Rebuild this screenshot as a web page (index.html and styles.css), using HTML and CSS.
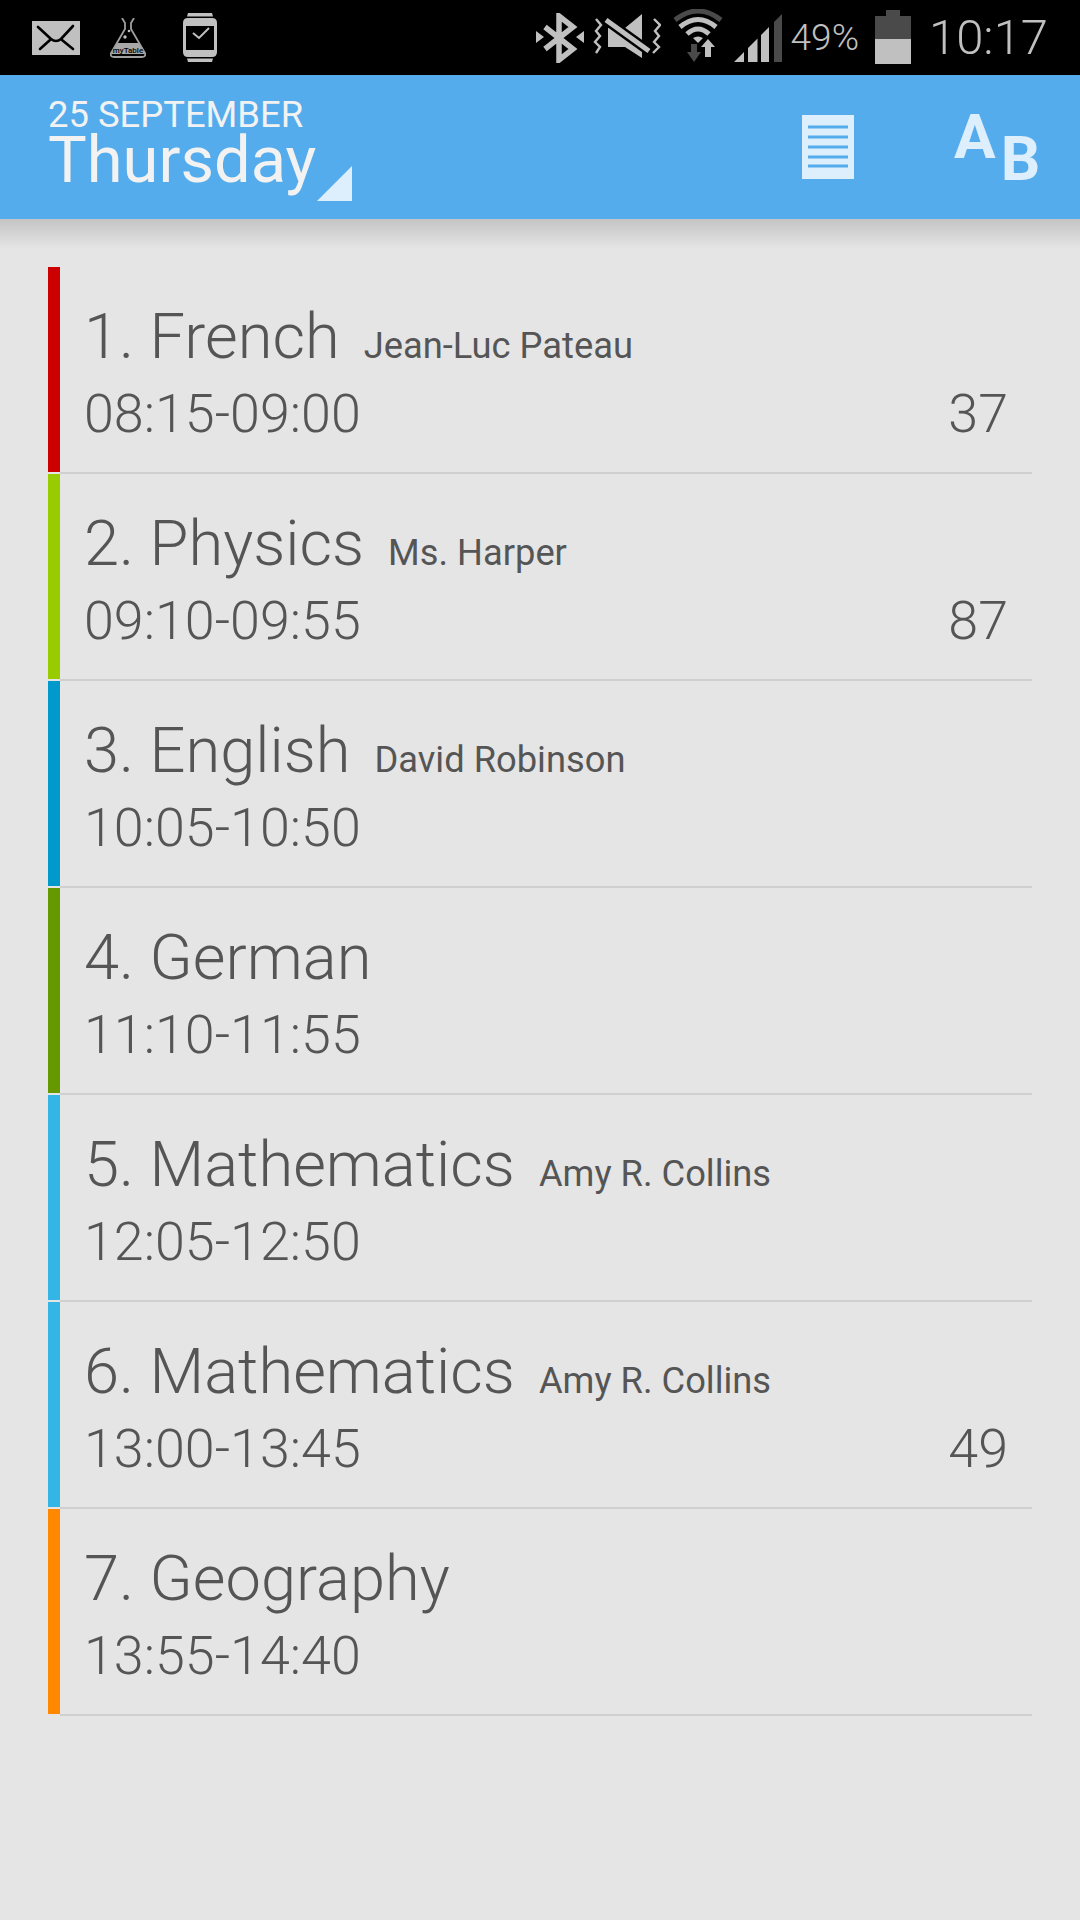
FILE: index.html
```html
<!DOCTYPE html>
<html lang="en">
<head>
  <meta charset="UTF-8" />
  <title>myTable</title>
  <link rel="stylesheet" href="styles.css">
</head>
<body>
  <div class="statusbar">
    <svg class="ic-mail" viewBox="0 0 48 34" width="48" height="34">
      <rect width="48" height="34" fill="#c0c0c0" />
      <path d="M6 6 L19 18 Q24 22 29 18 L41 5 M8 28 L18 19 M41 28 L30 19" stroke="#000" stroke-width="2.6" fill="none" stroke-linecap="round" />
    </svg>
    <svg class="ic-flask" viewBox="0 0 36 40" width="36" height="40">
      <path d="M7 25 H29 L35 36 H1 Z" fill="#a8a8a8" />
      <path d="M12 0 L15 5 V11 L1 35 Q0 39 4 39 H32 Q36 39 35 35 L21 11 V5 L24 0" fill="none" stroke="#a0a0a0" stroke-width="1.800" />
      <circle cx="15" cy="19" r="1.700" fill="#c0c0c0" />
      <circle cx="19" cy="13" r="1.300" fill="#c0c0c0" />
      <text class="flask-label" x="18" y="35" text-anchor="middle">myTable</text>
      <path d="M5 36.500 H31" stroke="#000" stroke-width="0.800" />
    </svg>
    <svg class="ic-watch" viewBox="0 0 34 49" width="34" height="49">
      <path d="M5 0 H29 L30 3.500 H4 Z M4 45.500 H30 L29 49 H5 Z" fill="#c0c0c0" />
      <path d="M5 5 H29 Q34 5 34 10 V39 Q34 44 29 44 H5 Q0 44 0 39 V10 Q0 5 5 5 Z" fill="#c0c0c0" />
      <rect x="3" y="13" width="28" height="24" fill="#000" />
      <path d="M10 20 L16 25 L26 15" fill="none" stroke="#c0c0c0" stroke-width="2" />
    </svg>

    <div class="status-right">
      <svg class="ic-bt" viewBox="0 0 48 50" width="48" height="50">
        <path d="M0 18 L8 24 L0 30 Z M48 18 L40 24 L48 30 Z" fill="#c0c0c0" />
        <path d="M9 14 L37 36 L23 47 V3 L37 14 L9 36" fill="none" stroke="#c0c0c0" stroke-width="5.500" />
      </svg>
      <svg class="ic-mute" viewBox="0 0 68 48" width="68" height="48">
        <path d="M3 5 L8 11 L3 17 L7 22 L2 28 L7 33 L3 39" fill="none" stroke="#c0c0c0" stroke-width="2.400" />
        <path d="M61 5 L67 11 L62 17 L66 22 L61 28 L66 33 L60 39" fill="none" stroke="#c0c0c0" stroke-width="2.400" />
        <path d="M15 14 H32 L49 0 V44 L32 33 H15 Z" fill="#c0c0c0" />
        <path d="M13 6 L56 37" stroke="#000" stroke-width="10" />
        <path d="M13 6 L56 37" stroke="#c0c0c0" stroke-width="5" />
      </svg>
      <svg class="ic-wifi" viewBox="0 0 50 54" width="50" height="54">
        <path d="M2 11 Q25 -7 48 11" fill="none" stroke="#4a4a4a" stroke-width="5" />
        <path d="M7 18 Q25 3 43 18" fill="none" stroke="#c0c0c0" stroke-width="5" />
        <path d="M14 25 Q25 15 36 25" fill="none" stroke="#c0c0c0" stroke-width="5" />
        <path d="M20 29 Q25 26 30 29 L25 34 Z" fill="#c0c0c0" />
        <path d="M18 35 H24 V43 H28 L21 53 L14 43 H18 Z" fill="#4a4a4a" />
        <path d="M35 30 L42 38 H38 V48 H32 V38 H28 Z" fill="#c0c0c0" />
      </svg>
      <svg class="ic-signal" viewBox="0 0 48 48" width="48" height="48">
        <path d="M0 48 L10 38 V48 Z M14 34 L23.500 24.500 V48 H14 Z M27 21 L35 13 V48 H27 Z" fill="#c0c0c0" />
        <path d="M40 8 L48 0 V48 H40 Z" fill="#4a4a4a" />
      </svg>
      <span class="percent">49%</span>
      <svg class="ic-battery" viewBox="0 0 36 54" width="36" height="54">
        <rect x="11" y="0" width="14" height="6" fill="#4a4a4a" />
        <rect y="6" width="36" height="23" fill="#4a4a4a" />
        <rect y="29" width="36" height="25" fill="#c0c0c0" />
      </svg>
      <span class="clock">10:17</span>
    </div>
  </div>

  <header class="appbar">
    <div class="date-block">
      <div class="date-small">25 SEPTEMBER</div>
      <div class="date-day">Thursday</div>
      <div class="corner"></div>
    </div>
    <svg class="ic-doc" viewBox="0 0 52 64" width="52" height="64">
      <rect width="52" height="64" fill="#ddeefc" />
      <path d="M6 12 H46 M6 22 H46 M6 32 H46 M6 42 H46 M6 51 H46" stroke="#55acec" stroke-width="3" />
    </svg>
    <div class="ab-icon"><span>A</span><span class="ab-b">B</span></div>
  </header>
  <div class="appbar-shadow"></div>

  <div class="lessons">
    <div class="lesson">
      <div class="lesson-color red"></div>
      <div class="lesson-body">
        <div class="lesson-top"><span class="subject">1. French</span><span class="teacher">Jean-Luc Pateau</span></div>
        <div class="lesson-bottom"><span>08:15-09:00</span><span class="room">37</span></div>
      </div>
    </div>
    <div class="lesson">
      <div class="lesson-color lime"></div>
      <div class="lesson-body">
        <div class="lesson-top"><span class="subject">2. Physics</span><span class="teacher">Ms. Harper</span></div>
        <div class="lesson-bottom"><span>09:10-09:55</span><span class="room">87</span></div>
      </div>
    </div>
    <div class="lesson">
      <div class="lesson-color blue"></div>
      <div class="lesson-body">
        <div class="lesson-top"><span class="subject">3. English</span><span class="teacher">David Robinson</span></div>
        <div class="lesson-bottom"><span>10:05-10:50</span></div>
      </div>
    </div>
    <div class="lesson">
      <div class="lesson-color green"></div>
      <div class="lesson-body">
        <div class="lesson-top"><span class="subject">4. German</span></div>
        <div class="lesson-bottom"><span>11:10-11:55</span></div>
      </div>
    </div>
    <div class="lesson">
      <div class="lesson-color sky"></div>
      <div class="lesson-body">
        <div class="lesson-top"><span class="subject">5. Mathematics</span><span class="teacher">Amy R. Collins</span></div>
        <div class="lesson-bottom"><span>12:05-12:50</span></div>
      </div>
    </div>
    <div class="lesson">
      <div class="lesson-color sky"></div>
      <div class="lesson-body">
        <div class="lesson-top"><span class="subject">6. Mathematics</span><span class="teacher">Amy R. Collins</span></div>
        <div class="lesson-bottom"><span>13:00-13:45</span><span class="room">49</span></div>
      </div>
    </div>
    <div class="lesson">
      <div class="lesson-color orange"></div>
      <div class="lesson-body">
        <div class="lesson-top"><span class="subject">7. Geography</span></div>
        <div class="lesson-bottom"><span>13:55-14:40</span></div>
      </div>
    </div>
  </div>
</body>
</html>
```

FILE: styles.css
```css
body {
  margin: 0;
  height: 1920px;
  overflow: hidden;
  background-color: #e5e5e5;
  color: #555;
  font-family: Roboto, sans-serif;
}

.statusbar {
  height: 75px;
  background: #000;
  display: flex;
  align-items: center;
  padding-left: 32px;
  color: #c0c0c0;
  font-weight: 300;
}
.statusbar svg {
  flex: none;
  display: block;
}
.ic-flask { margin-left: 30px; }
.ic-watch { margin-left: 37px; }
.flask-label {
  font-family: Roboto, sans-serif;
  font-size: 8px;
  font-weight: 500;
  fill: #000;
}
.status-right {
  margin-left: auto;
  display: flex;
  align-items: center;
  padding-right: 32px;
}
.ic-mute { margin-left: 9px; }
.ic-wifi { margin-left: 12px; margin-bottom: 3px; }
.ic-signal { margin-left: 11px; margin-top: 1px; }
.percent {
  font-size: 37px;
  margin-left: 9px;
}
.ic-battery { margin-left: 16px; margin-top: -1px; }
.clock {
  font-size: 49px;
  margin-left: 18px;
}

.appbar {
  height: 144px;
  background: #55acec;
  color: #f2f2f2;
  display: flex;
  align-items: flex-start;
}
.date-block {
  position: relative;
  padding: 22px 0 0 48px;
  width: 304px;
  margin-right: 450px;
}
.date-small {
  font-size: 36.400px;
  line-height: 35px;
}
.date-day {
  font-size: 65px;
  line-height: 56px;
}
.corner {
  position: absolute;
  left: 317px;
  top: 91px;
  width: 35px;
  height: 35px;
  background: #ddeefc;
  clip-path: polygon(100% 0, 100% 100%, 0 100%);
}
.ic-doc {
  margin-top: 40px;
  flex: none;
}
.ab-icon {
  margin: 31px 0 0 100px;
  display: flex;
  color: #ddeefc;
  font-size: 62px;
  font-weight: 700;
  line-height: 62px;
}
.ab-b {
  margin: 22px 0 0 5px;
}

.appbar-shadow {
  height: 30px;
  background: linear-gradient(#c4c4c4, #e5e5e5);
}

.lessons {
  margin: 18px 48px 0;
}
.lesson {
  display: flex;
  height: 207px;
}
.lesson-color {
  width: 12px;
  height: 205px;
  flex: none;
}
.red { background: #cc0000; }
.lime { background: #99cc00; }
.blue { background: #0099cc; }
.green { background: #669900; }
.sky { background: #33b5e5; }
.orange { background: #ff8800; }

.lesson-body {
  flex: 1;
  border-bottom: 2px solid #cfcfcf;
  box-sizing: border-box;
  padding: 32px 24px 0 24px;
  font-weight: 300;
}
.lesson-top {
  display: flex;
  align-items: baseline;
  height: 75px;
  line-height: 74px;
}
.subject {
  font-size: 63.200px;
}
.teacher {
  font-size: 36.300px;
  font-weight: 400;
  margin-left: 24px;
}
.lesson-bottom {
  display: flex;
  justify-content: space-between;
  font-size: 53.800px;
  line-height: 80px;
}
```
